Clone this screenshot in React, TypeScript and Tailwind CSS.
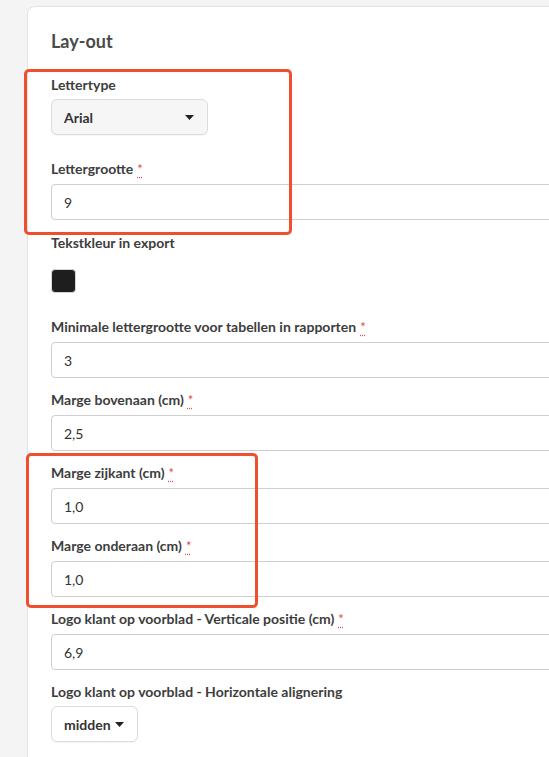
import React from 'react';

const Req = () => (
  <abbr title="verplicht" className="ml-[4px] font-normal text-[13px] text-[#e5484d] underline decoration-dotted decoration-[#e5484d] underline-offset-[3px]">
    *
  </abbr>
);

const Label = ({ children, required }: { children: React.ReactNode; required?: boolean }) => (
  <label className="block h-[20px] text-[14px] leading-[20px] font-bold text-[#3d3d3d]">
    {children}
    {required && <Req />}
  </label>
);

const TextInput = ({ value }: { value: string }) => (
  <div className="mt-[5px] h-[36px] w-full rounded-[4px] border border-[#cfcfcf] bg-white px-[12px] flex items-center text-[14px] text-[#333]">
    {value}
  </div>
);

const Caret = () => (
  <svg width="9" height="5" viewBox="0 0 9 5" className="text-[#222]">
    <path d="M0 0 L9 0 L4.5 5 Z" fill="currentColor" />
  </svg>
);

const Select = ({ value, width, grey }: { value: string; width: string; grey?: boolean }) => (
  <div
    className={`mt-[4px] h-[36px] ${width} rounded-[6px] border border-[#dcdcdc] pl-[12px] pr-[13px] flex items-center justify-between text-[14px] font-bold text-[#333] shadow-[0_1px_1px_rgba(0,0,0,0.04)] ${
      grey ? 'bg-[#f6f6f6]' : 'bg-white'
    }`}
  >
    <span>{value}</span>
    <Caret />
  </div>
);

const App = () => {
  return (
    <div className="relative h-[757px] w-[549px] overflow-hidden bg-[#f4f4f4] pt-[6px] pl-[27px]" style={{ fontFamily: 'Lato, "Open Sans", sans-serif' }}>
      <div className="w-[620px] min-h-[800px] bg-white border border-[#e3e3e3] rounded-tl-[8px] pl-[23px] pt-[22px]">
        <h2 className="h-[24px] text-[18px] leading-[24px] font-bold text-[#4a4a4a]">Lay-out</h2>

        <div className="mt-[22px]">
          <Label>Lettertype</Label>
          <Select value="Arial" width="w-[157px]" grey />
        </div>

        <div className="mt-[24px]">
          <Label required>Lettergrootte</Label>
          <TextInput value="9" />
        </div>

        <div className="mt-[13px]">
          <Label>Tekstkleur in export</Label>
          <div className="mt-[16px] h-[24px] w-[25px] rounded-[4px] bg-[#1e1e1e] border border-[#d6d6d6]" />
        </div>

        <div className="mt-[24px] flex flex-col gap-[12px]">
          <div>
            <Label required>Minimale lettergrootte voor tabellen in rapporten</Label>
            <TextInput value="3" />
          </div>
          <div>
            <Label required>Marge bovenaan (cm)</Label>
            <TextInput value="2,5" />
          </div>
          <div>
            <Label required>Marge zijkant (cm)</Label>
            <TextInput value="1,0" />
          </div>
          <div>
            <Label required>Marge onderaan (cm)</Label>
            <TextInput value="1,0" />
          </div>
          <div>
            <Label required>Logo klant op voorblad - Verticale positie (cm)</Label>
            <TextInput value="6,9" />
          </div>
          <div>
            <Label>Logo klant op voorblad - Horizontale alignering</Label>
            <Select value="midden" width="w-[87px]" />
          </div>
        </div>
      </div>

      {/* annotation boxes */}
      <div className="absolute left-[24px] top-[69px] w-[268px] h-[166px] rounded-[5px] border-[3px] border-[#ef4f2f] pointer-events-none" />
      <div className="absolute left-[26px] top-[453px] w-[232px] h-[155px] rounded-[5px] border-[3px] border-[#ef4f2f] pointer-events-none" />
    </div>
  );
};

export default App;
